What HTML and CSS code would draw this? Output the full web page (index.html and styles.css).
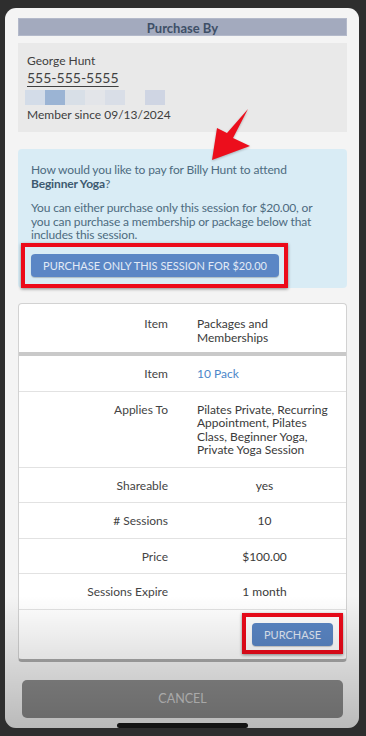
FILE: index.html
```html
<!DOCTYPE html>
<html>
<head>
  <title>Purchase By</title>
  <link rel="stylesheet" href="styles.css">
</head>
<body>
  <div class="modal">
    <div class="modal-title">Purchase By</div>

    <div class="customer">
      <div class="customer-name">George Hunt</div>
      <div class="customer-phone">555-555-5555</div>
      <div class="pixels">
        <span class="px px-a"></span>
        <span class="px px-b"></span>
        <span class="px px-c"></span>
        <span class="px px-d"></span>
        <span class="px px-e"></span>
        <span class="px px-f"></span>
        <span class="px px-g"></span>
      </div>
      <div class="customer-since">Member since 09/13/2024</div>
    </div>

    <svg class="arrow" width="50" height="56" viewBox="0 0 50 56">
      <polygon points="43,1 28,30 45,38 7,52 12,20 22,25" fill="#ec0e1c"/>
    </svg>

    <div class="info">
      <p class="info-question">How would you like to pay for Billy Hunt to attend <b>Beginner Yoga</b>?</p>
      <p class="info-text">You can either purchase only this session for $20.00, or you can purchase a membership or package below that includes this session.</p>
      <div class="highlight highlight-wide">
        <button class="btn btn-session">PURCHASE ONLY THIS SESSION FOR $20.00</button>
      </div>
    </div>

    <div class="package">
      <div class="row row-head">
        <div class="cell-label">Item</div>
        <div class="cell-value">Packages and<br>Memberships</div>
      </div>
      <div class="row">
        <div class="cell-label">Item</div>
        <div class="cell-value link">10 Pack</div>
      </div>
      <div class="row">
        <div class="cell-label">Applies To</div>
        <div class="cell-value">Pilates Private, Recurring Appointment, Pilates Class, Beginner Yoga, Private Yoga Session</div>
      </div>
      <div class="row">
        <div class="cell-label">Shareable</div>
        <div class="cell-value center">yes</div>
      </div>
      <div class="row">
        <div class="cell-label"># Sessions</div>
        <div class="cell-value center">10</div>
      </div>
      <div class="row">
        <div class="cell-label">Price</div>
        <div class="cell-value center">$100.00</div>
      </div>
      <div class="row">
        <div class="cell-label">Sessions Expire</div>
        <div class="cell-value center">1 month</div>
      </div>
      <div class="row-action">
        <div class="highlight highlight-small">
          <button class="btn btn-purchase">PURCHASE</button>
        </div>
      </div>
    </div>

    <button class="btn-cancel">CANCEL</button>
  </div>
  <div class="home-bar"></div>
</body>
</html>
```

FILE: styles.css
```css
body {
  margin: 0;
  height: 736px;
  background: #2e2e2e;
  font-family: Lato, "Noto Sans", sans-serif;
  font-size: 12px;
  color: #3a3a3a;
  overflow: hidden;
  position: relative;
}

.modal {
  position: relative;
  width: 354px;
  height: 720px;
  margin: 8px 0 0 5px;
  padding: 10px 12px 0 13px;
  box-sizing: border-box;
  background: #f4f4f4;
  border-radius: 11px;
  overflow: hidden;
}

.modal::after {
  content: "";
  position: absolute;
  left: 0;
  right: 0;
  bottom: 0;
  height: 132px;
  background: linear-gradient(to bottom, rgba(0, 0, 0, 0), rgba(0, 0, 0, 0.24));
  pointer-events: none;
}

.modal-title {
  height: 18px;
  line-height: 18px;
  background: #a3aabe;
  border: 1px solid #b3b9ca;
  box-sizing: border-box;
  text-align: center;
  font-weight: bold;
  font-size: 13px;
  color: #3e4f67;
}

.customer {
  margin-top: 7px;
  height: 89px;
  padding: 10px 9px 0;
  box-sizing: border-box;
  background: #e9e9e9;
  color: #404040;
}

.customer-name {
  line-height: 15px;
}

.customer-phone {
  margin-top: 2px;
  font-size: 14px;
  line-height: 16px;
  text-decoration: underline;
  text-underline-offset: 3px;
}

.pixels {
  display: flex;
  margin: 4px 0 0 -2px;
}

.px {
  width: 20px;
  height: 15px;
}

.px-a { background: #d3dce8; }
.px-b { background: #9bb4d4; }
.px-c { background: #d8dfe7; }
.px-d { background: #e3e5e9; }
.px-e { background: #d9dee7; }
.px-f { background: transparent; }
.px-g { background: #cfd5e3; }

.customer-since {
  margin-top: 2px;
  line-height: 15px;
}

.arrow {
  position: absolute;
  left: 200px;
  top: 100px;
  filter: drop-shadow(0 1px 1px rgba(0, 0, 0, 0.25));
}

.info {
  margin-top: 17px;
  height: 139px;
  padding: 14px 20px 0 13px;
  box-sizing: border-box;
  background: #d9ecf5;
  border-radius: 4px;
  color: #4d6b80;
  letter-spacing: -0.15px;
}

.info p {
  margin: 0;
  line-height: 13.5px;
}

.info-question {
  margin-bottom: 11px !important;
}

.info-question b {
  color: #3d5a70;
}

.highlight {
  display: inline-flex;
  border: 4px solid #ec0a1a;
  box-shadow: 0 1px 3px rgba(0, 0, 0, 0.45);
}

.highlight-wide {
  margin: 1px 0 0 -10px;
  padding: 7px 5px 7px 6px;
}

.highlight-small {
  padding: 6px 6px 4px 6px;
}

.btn {
  border: none;
  border-radius: 4px;
  background: #5a86c5;
  color: #e2eaf6;
  font-family: inherit;
  letter-spacing: 0;
  box-shadow: 0 1px 1px rgba(0, 0, 0, 0.2);
}

.btn-session {
  width: 248px;
  height: 23px;
  font-size: 11px;
}

.btn-purchase {
  width: 81px;
  height: 23px;
  font-size: 11px;
}

.package {
  margin-top: 15px;
  background: #fff;
  border: 1px solid #d2d2d2;
  border-bottom: 3px solid #a9a9a9;
  border-radius: 4px;
}

.row {
  display: grid;
  grid-template-columns: 149px 1fr;
  column-gap: 29px;
  padding: 11px 14px 10px 0;
  line-height: 13.5px;
  border-top: 1px solid #e2e2e2;
}

.row-head {
  border-top: none;
  padding-top: 13px;
  padding-bottom: 8px;
  border-bottom: 4px solid #c9c9c9;
}

.row-head + .row {
  border-top: none;
}

.cell-label {
  text-align: right;
  color: #444;
}

.cell-value {
  color: #3a3a3a;
}

.center {
  text-align: center;
}

.link {
  color: #4b86c9;
}

.row-action {
  display: flex;
  justify-content: flex-end;
  padding: 3px 3px 5px 0;
  border-top: 1px solid #e2e2e2;
}

.btn-cancel {
  display: block;
  width: 321px;
  height: 38px;
  margin: 18px 0 0 4px;
  border: none;
  border-radius: 5px;
  background: #8a8a8a;
  color: #cfcfcf;
  font-family: inherit;
  font-size: 12.5px;
}

.home-bar {
  position: absolute;
  left: 117px;
  top: 723px;
  width: 131px;
  height: 5px;
  border-radius: 3px;
  background: #141414;
}
```
